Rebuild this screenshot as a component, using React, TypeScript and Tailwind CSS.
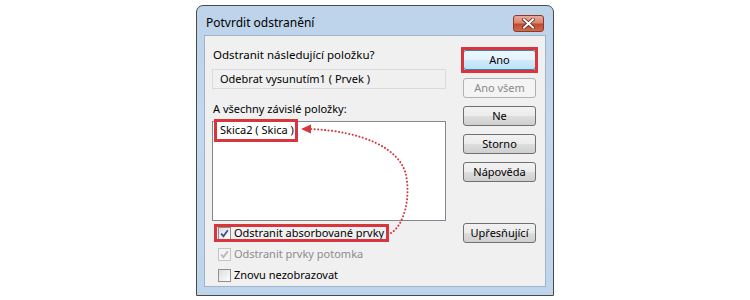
import React from "react";

const font = { fontFamily: '"Noto Sans", "Open Sans", sans-serif' };

function Btn({ children, disabled, primary }: { children: React.ReactNode; disabled?: boolean; primary?: boolean }) {
  if (disabled) {
    return (
      <div className="w-[73px] h-[20px] rounded-[3px] border border-[#adb2b5] bg-[#f4f4f4] flex items-center justify-center text-[11px] text-[#8a8a8a]">
        {children}
      </div>
    );
  }
  return (
    <div
      className={
        "w-[73px] h-[20px] rounded-[3px] border flex items-center justify-center text-[11px] text-black " +
        (primary
          ? "border-[#3c7fb1] bg-[linear-gradient(#eef7fd_0%,#e3f3fc_50%,#cfeafb_51%,#bde2f7_100%)]"
          : "border-[#707070] bg-[linear-gradient(#f2f2f2_0%,#ebebeb_50%,#dddddd_51%,#cfcfcf_100%)]")
      }
    >
      {children}
    </div>
  );
}

function Check({ checked, disabled }: { checked?: boolean; disabled?: boolean }) {
  return (
    <div
      className={
        "w-[13px] h-[13px] border flex items-center justify-center shrink-0 " +
        (disabled ? "border-[#c5c5c5] bg-[#f4f4f4]" : "border-[#8e8f8f] bg-[linear-gradient(135deg,#dcdcdc,#ffffff)]")
      }
    >
      {checked && (
        <svg width="9" height="9" viewBox="0 0 9 9">
          <path
            d="M1.2 4.6 L3.4 7.2 L7.8 1.2"
            fill="none"
            stroke={disabled ? "#b8b8b8" : "#3d4f8f"}
            strokeWidth="1.8"
          />
        </svg>
      )}
    </div>
  );
}

export default function App() {
  return (
    <div className="relative w-[750px] h-[300px] bg-white overflow-hidden" style={font}>
      <div className="absolute left-[196px] top-[5px] w-[358px] h-[291px] rounded-t-[7px] border border-[#4a4a4a] bg-[linear-gradient(#bcd3ea,#c2d8ee_40%,#bed5ec)] flex flex-col">
        {/* title bar */}
        <div className="h-[29px] flex items-start justify-between pl-[9px] pr-[9px]">
          <div className="mt-[9px] text-[12px] leading-[16px] text-black whitespace-nowrap">Potvrdit odstranění</div>
          <div className="mt-[9px] w-[31px] h-[17px] rounded-[3px] border border-[#8b3a2a] bg-[linear-gradient(#e9a99a_0%,#d98671_45%,#c34a2f_55%,#cf6a4a_100%)] flex items-center justify-center">
            <svg width="13" height="11" viewBox="0 0 13 11">
              <path d="M2 1.5 L11 9.5 M11 1.5 L2 9.5" stroke="#5a2a20" strokeWidth="3.6" strokeLinecap="square" />
              <path d="M2 1.5 L11 9.5 M11 1.5 L2 9.5" stroke="#ffffff" strokeWidth="2" strokeLinecap="square" />
            </svg>
          </div>
        </div>
        {/* client area */}
        <div className="mx-[7px] h-[252px] border border-[#9fb4ca] bg-[#f0f0f0] flex text-[11px] text-black whitespace-nowrap">
          {/* left column */}
          <div className="w-[246px] pl-[7px] flex flex-col">
            <div className="mt-[11px] h-[16px] leading-[16px] pl-[1px] text-[11.5px]">Odstranit následující položku?</div>
            <div className="mt-[6px] w-[234px] h-[20px] border border-[#dadada] bg-[#f0f0f0] flex items-center pl-[7px]">
              Odebrat vysunutím1 ( Prvek )
            </div>
            <div className="mt-[12px] h-[16px] leading-[16px] pl-[1px]">A všechny závislé položky:</div>
            <div className="relative mt-[4px] w-[234px] h-[101px] border border-[#828790] bg-white">
              <div className="absolute left-[1px] top-[-3px] w-[84px] h-[23px] border-[3px] border-[#d8353c] flex items-center pl-[3px] leading-[16px]">
                Skica2 ( Skica )
              </div>
            </div>
            <div className="mt-[2px] flex flex-col">
              <div className="relative h-[21px] flex items-center gap-[3px] pl-[6px]">
                <div className="absolute left-[2px] top-[1px] w-[175px] h-[18px] border-[3px] border-[#d8353c]" />
                <Check checked />
                <span>Odstranit absorbované prvky</span>
              </div>
              <div className="h-[21px] flex items-center gap-[3px] pl-[6px] text-[#8d8d8d]">
                <Check checked disabled />
                <span>Odstranit prvky potomka</span>
              </div>
              <div className="h-[21px] flex items-center gap-[3px] pl-[6px]">
                <Check />
                <span>Znovu nezobrazovat</span>
              </div>
            </div>
          </div>
          {/* right column */}
          <div className="ml-[12px] pt-[14px] flex flex-col gap-[8px]">
            <div className="relative">
              <div className="absolute -left-[2px] -top-[3px] w-[77px] h-[26px] border-[3px] border-[#d8353c]" />
              <Btn primary>Ano</Btn>
            </div>
            <Btn disabled>Ano všem</Btn>
            <Btn>Ne</Btn>
            <Btn>Storno</Btn>
            <Btn>Nápověda</Btn>
            <div className="mt-[33px]">
              <Btn>Upřesňující</Btn>
            </div>
          </div>
        </div>
      </div>
      <svg className="absolute left-0 top-0" width="750" height="300" viewBox="0 0 750 300">
        <path
          d="M391 233 C403 226 411 200 406 175 C400 148 362 131 310 129"
          fill="none"
          stroke="#d8353c"
          strokeWidth="2"
          strokeDasharray="0.1 3.4"
          strokeLinecap="round"
        />
        <polygon points="301,129 311,124.5 311,133.5" fill="#d8353c" />
      </svg>
    </div>
  );
}
